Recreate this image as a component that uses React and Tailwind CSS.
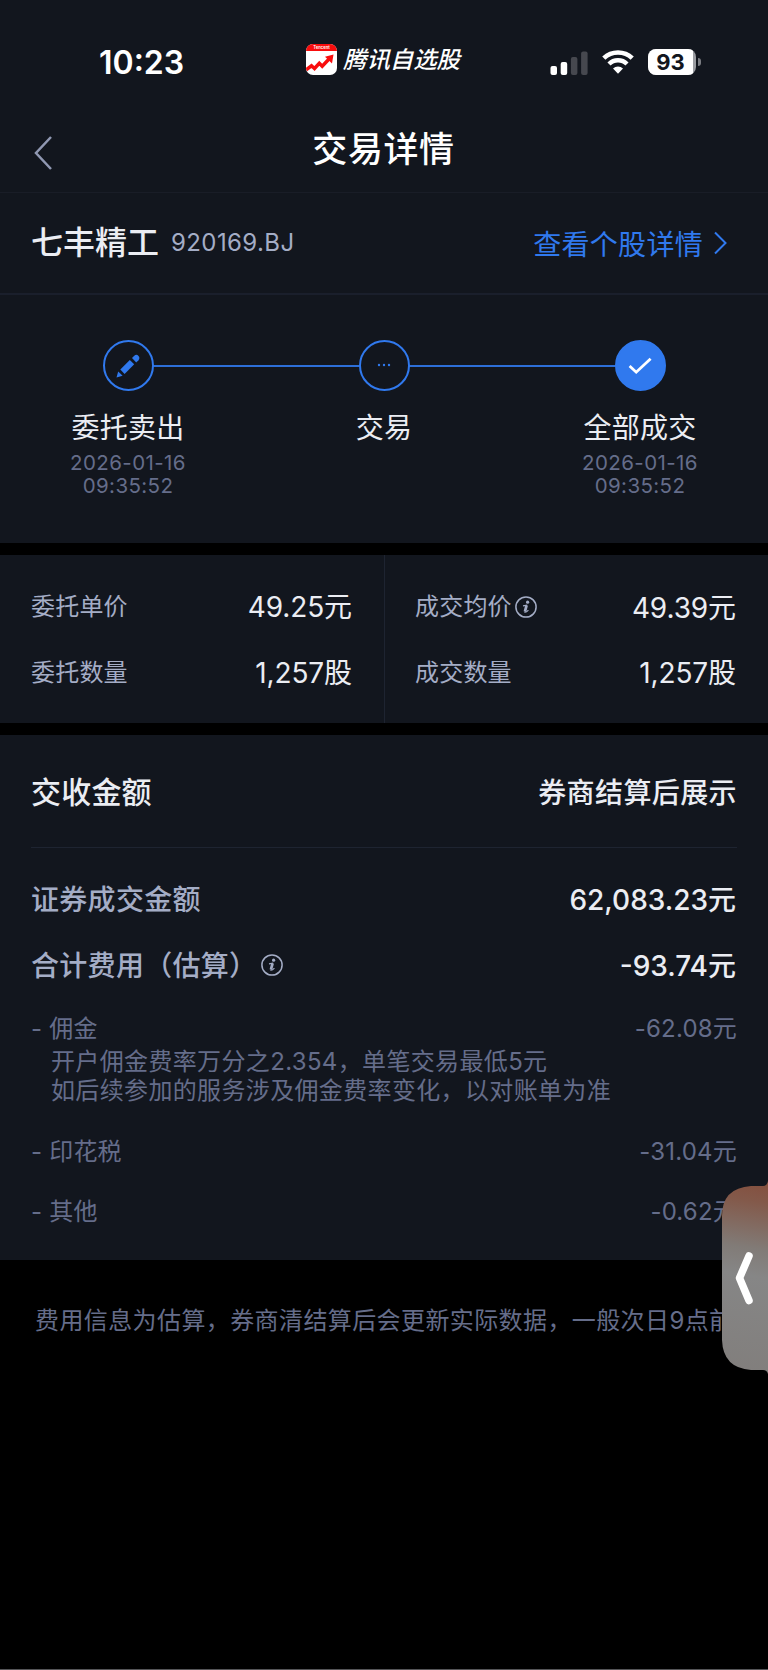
const INFO_COLOR = '#a4adc6';

function StatusBar() {
  return (
    <div className="flex h-[112px] items-start pt-[38px]">
      <div className="ml-[99px] w-[207px] text-[32px] leading-[50px] font-semibold text-white">10:23</div>
      <div className="flex items-start pt-[6px]">
        <AppLogo />
        <span className="ml-[6px] text-[23.4px] leading-[32px] font-medium text-white italic whitespace-nowrap">腾讯自选股</span>
      </div>
      <div className="ml-auto mr-[67px] flex items-center pt-[11px]">
        <SignalIcon />
        <WifiIcon />
        <BatteryIcon />
      </div>
    </div>
  );
}

function AppLogo() {
  return (
    <svg width="31" height="31" viewBox="0 0 31 31" className="rounded-[7px] bg-white">
      <rect width="31" height="7" fill="#f80d0d" />
      <text x="15.5" y="5.4" textAnchor="middle" fontSize="4.2" fill="#fff" fontWeight="600">Tencent</text>
      <path d="M0 26 L5.5 21.8 L8.5 24.5 L13.3 19.3 L16.2 22.2 L23.5 14.5" fill="none" stroke="#f80d0d" strokeWidth="3.4" />
      <path d="M27.5 10.5 L26 19.5 L19 12.8 Z" fill="#f80d0d" />
    </svg>
  );
}

function SignalIcon() {
  return (
    <svg width="38" height="25" viewBox="0 0 38 25">
      <rect x="0.5" y="16" width="6.5" height="9" rx="2" fill="#fff" />
      <rect x="10.7" y="12" width="6.5" height="13" rx="2" fill="#fff" />
      <rect x="20.9" y="7" width="6.5" height="18" rx="2" fill="#46484f" />
      <rect x="31.1" y="1.5" width="6.5" height="23.5" rx="2" fill="#46484f" />
    </svg>
  );
}

function WifiIcon() {
  return (
    <svg width="32" height="24" viewBox="0 0 32 24" className="ml-[14px]" fill="none" stroke="#fff">
      <path d="M1.8 8.2 A20.5 20.5 0 0 1 30.2 8.2" strokeWidth="4.6" />
      <path d="M7 14 A12.6 12.6 0 0 1 25 14" strokeWidth="4.4" />
      <path d="M16 23.8 L11 18.6 A7.2 7.2 0 0 1 21 18.6 Z" fill="#fff" stroke="none" />
    </svg>
  );
}

function BatteryIcon() {
  return (
    <div className="ml-[14px] flex items-center">
      <div className="flex h-[26px] w-[48px] overflow-hidden rounded-[8px] bg-[#9a9ca1]">
        <div className="w-[45px] bg-white text-center text-[22px] leading-[27px] font-bold text-[#12161e]">93</div>
      </div>
      <div className="ml-[2px] h-[8px] w-[3px] rounded-r-full bg-[#7b7d83]" />
    </div>
  );
}

function InfoIcon({ className }) {
  return (
    <svg width="22" height="22" viewBox="0 0 22 22" className={className} fill="none" stroke={INFO_COLOR}>
      <circle cx="11" cy="11" r="10.1" strokeWidth="1.5" />
      <circle cx="12.6" cy="6.2" r="1.6" fill={INFO_COLOR} stroke="none" />
      <path d="M8 9.9 L12.2 9.2" strokeWidth="1.2" />
      <path d="M11.6 9.3 L9.9 15.6" strokeWidth="2.7" />
      <path d="M9.4 16.1 Q11 16.8 13.4 14.2" strokeWidth="1.2" />
    </svg>
  );
}

function Step({ icon, label, date, time, filled }) {
  return (
    <div className="flex w-[256px] flex-col items-center">
      <div className={`flex h-[51px] w-[51px] items-center justify-center rounded-full border-2 border-[#3079ee] ${filled ? 'bg-[#3079ee]' : 'bg-[#12161e]'}`}>
        {icon}
      </div>
      <div className="mt-[17px] text-[28px] leading-[40px] tracking-[0.3px] text-[#ebedf3]">{label}</div>
      {date && (
        <div className="mt-[3px] text-center text-[20.5px] leading-[23px] tracking-[0.4px] text-[#656d8a]">
          <div>{date}</div>
          <div>{time}</div>
        </div>
      )}
    </div>
  );
}

function Steps() {
  return (
    <div className="relative flex h-[248px] pt-[45px]">
      <div className="absolute top-[70px] left-[128px] h-[2px] w-[512px] bg-[#2d6fd8]" />
      <div className="relative flex">
        <Step
          label="委托卖出"
          date="2026-01-16"
          time="09:35:52"
          icon={
            <svg width="24" height="24" viewBox="0 0 24 24" fill="#3079ee">
              <path d="M0.5 23.5 L2.2 17.4 L6.6 21.8 Z" />
              <path d="M4.3 15.6 L13.8 6 L18.2 10.2 L8.6 19.9 Z" />
              <path d="M16 4.1 L18 1.9 Q20.4 -0.2 22.5 1.9 Q24.3 4 22.5 6.2 L20.2 8.4 Z" />
            </svg>
          }
        />
        <Step
          label="交易"
          icon={
            <svg width="14" height="4" viewBox="0 0 14 4" fill="#3079ee" className="mb-[2px]">
              <circle cx="2" cy="2" r="1.2" />
              <circle cx="7" cy="2" r="1.2" />
              <circle cx="12" cy="2" r="1.2" />
            </svg>
          }
        />
        <Step
          filled
          label="全部成交"
          date="2026-01-16"
          time="09:35:52"
          icon={
            <svg width="24" height="18" viewBox="0 0 24 18" fill="none" stroke="#fff" strokeWidth="2.8">
              <path d="M1.6 9 L8.2 15.2 L22.6 1.8" />
            </svg>
          }
        />
      </div>
    </div>
  );
}

function Quote({ label, value, info }) {
  return (
    <div className="flex h-[66px] items-center justify-between">
      <span className="flex items-center pb-px text-[24px] tracking-[0.2px] text-[#a4adc6]">
        {label}
        {info && <InfoIcon className="ml-[3px]" />}
      </span>
      <span className={`text-[28px] tracking-[-0.1px] text-[#ebedf3] ${info ? 'pt-[2px]' : ''}`}>{value}</span>
    </div>
  );
}

function Fee({ label, value }) {
  return (
    <div className="flex h-[36px] items-center justify-between text-[24px] leading-[36px] tracking-[0.2px] text-[#656d8a]">
      <span>- {label}</span>
      <span>{value}</span>
    </div>
  );
}

function SideHandle() {
  return (
    <svg width="46" height="193" viewBox="0 0 46 193" className="absolute top-[1181px] left-[722px]">
      <defs>
        <linearGradient id="handle" gradientUnits="userSpaceOnUse" x1="30" y1="0" x2="0" y2="193">
          <stop offset="0" stopColor="#84503f" />
          <stop offset="0.1" stopColor="#83594a" />
          <stop offset="0.34" stopColor="#817b77" />
          <stop offset="0.48" stopColor="#868686" />
          <stop offset="1" stopColor="#817e7c" />
        </linearGradient>
      </defs>
      <path d="M46 0 Q45 5 41 5 H29 Q0 7 0 35 V159 Q1 187 29 189 H41 Q45 189 46 193 Z" fill="url(#handle)" />
      <path d="M27 75 L17.5 97 L27 119.5" fill="none" stroke="#fff" strokeWidth="7.5" strokeLinecap="round" strokeLinejoin="round" />
    </svg>
  );
}

export default function App() {
  return (
    <div className="relative flex h-[1670px] w-[768px] flex-col overflow-hidden bg-black font-['Inter','Noto_Sans_CJK_SC',sans-serif]">
      <div className="bg-[#12161e]">
        <StatusBar />
        <header className="flex h-[81px] items-start border-b border-[#191d27]">
          <svg width="18" height="34" viewBox="0 0 18 34" className="mt-[24px] ml-[34px]" fill="none" stroke="#9098b2" strokeWidth="2.5">
            <path d="M17 1 L2 17 L17 33" />
          </svg>
          <h1 className="mr-[53px] flex-1 pt-[12px] text-center text-[35px] leading-[50px] font-medium tracking-[0.6px] text-white">交易详情</h1>
        </header>

        <div className="flex h-[102px] items-center border-b-2 border-[#1a1f2c] px-[31px]">
          <span className="text-[32px] font-medium text-[#ebedf3]">七丰精工</span>
          <span className="ml-[12px] text-[24px] tracking-[0.4px] text-[#a4adc6]">920169.BJ</span>
          <a className="mr-[10px] ml-auto flex items-center text-[28px] tracking-[0.3px] text-[#3079ee]">
            <span className="pt-[3px]">查看个股详情</span>
            <svg width="13" height="24" viewBox="0 0 13 24" className="ml-[11px]" fill="none" stroke="#3079ee" strokeWidth="2">
              <path d="M1 1.5 L11.5 12 L1 22.5" />
            </svg>
          </a>
        </div>

        <Steps />
      </div>

      <div className="mt-[12px] grid h-[168px] grid-cols-2 bg-[#12161e] pt-[19px]">
        <div className="pr-[32px] pl-[31px]">
          <Quote label="委托单价" value="49.25元" />
          <Quote label="委托数量" value="1,257股" />
        </div>
        <div className="-mt-[19px] border-l border-[#1e2431] pt-[19px] pr-[32px] pl-[30px]">
          <Quote label="成交均价" value="49.39元" info />
          <Quote label="成交数量" value="1,257股" />
        </div>
      </div>

      <div className="mt-[12px] h-[525px] bg-[#12161e] px-[31px]">
        <div className="flex h-[113px] items-center justify-between border-b border-[#1e2431] pt-[2px] font-medium text-[#ebedf3]">
          <span className="text-[30px] tracking-[0.2px]">交收金额</span>
          <span className="pt-px text-[28px] tracking-[0.4px]">券商结算后展示</span>
        </div>
        <div className="mt-[18px] flex h-[67px] items-center justify-between text-[28px] font-medium">
          <span className="tracking-[0.3px] text-[#a4adc6]">证券成交金额</span>
          <span className="mr-px text-[#ebedf3]">62,083.23元</span>
        </div>
        <div className="flex h-[65px] items-center justify-between text-[28px] font-medium">
          <span className="flex items-center tracking-[0.3px] text-[#a4adc6]">
            合计费用（估算）
            <InfoIcon className="mb-[2px] ml-[4px]" />
          </span>
          <span className="mr-px text-[#ebedf3]">-93.74元</span>
        </div>
        <div className="mt-[13px]">
          <Fee label="佣金" value="-62.08元" />
          <div className="pl-[20px] text-[24px] leading-[29px] tracking-[0.35px] text-[#656d8a]">
            <p>开户佣金费率万分之2.354，单笔交易最低5元</p>
            <p>如后续参加的服务涉及佣金费率变化，以对账单为准</p>
          </div>
        </div>
        <div className="mt-[29px] flex flex-col gap-[24px]">
          <Fee label="印花税" value="-31.04元" />
          <Fee label="其他" value="-0.62元" />
        </div>
      </div>

      <p className="mt-[43px] ml-[35px] text-[24px] leading-[36px] tracking-[0.4px] whitespace-nowrap text-[#656d8a]">
        费用信息为估算，券商清结算后会更新实际数据，一般次日9点前
      </p>

      <div className="mt-auto h-px bg-[#555558]" />

      <SideHandle />
    </div>
  );
}
